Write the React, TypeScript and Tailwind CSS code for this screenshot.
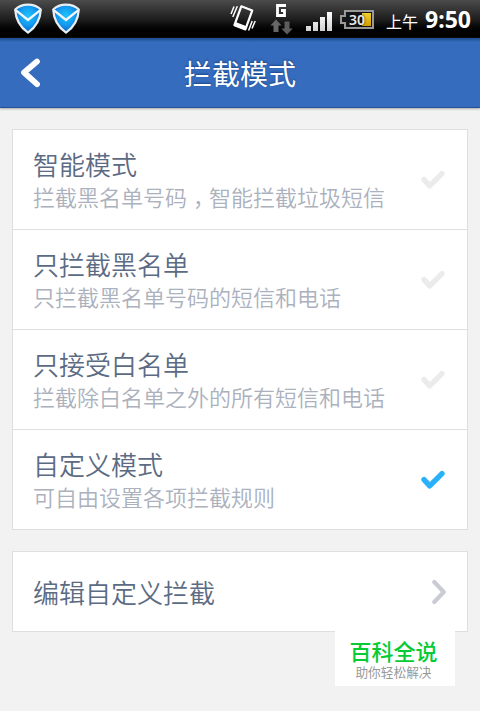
import * as React from 'react';

interface Mode {
    title: string;
    desc: React.ReactNode;
    checked?: boolean;
}

const modes: Mode[] = [
    {
        title: '智能模式',
        desc: <>拦截黑名单号码<span className="inline-block w-[22px] pl-[6px] [font-feature-settings:'halt']">，</span>智能拦截垃圾短信</>,
    },
    { title: '只拦截黑名单', desc: '只拦截黑名单号码的短信和电话' },
    { title: '只接受白名单', desc: '拦截除白名单之外的所有短信和电话' },
    { title: '自定义模式', desc: '可自由设置各项拦截规则', checked: true },
];

const ShieldIcon = ({ id }: { id: string }) => (
    <svg width="30" height="34" viewBox="0 0 30 34" className="block">
        <defs>
            <radialGradient id={id} cx="50%" cy="40%" r="55%">
                <stop offset="0" stopColor="#1cc4fb" />
                <stop offset="0.6" stopColor="#149bf0" />
                <stop offset="1" stopColor="#0b6ccc" />
            </radialGradient>
        </defs>
        <path d="M15 2.6C10.5 2.6 5.5 4.2 2.2 7.6C2.6 15.5 6.2 24.5 15 30.6C23.8 24.5 27.4 15.5 27.8 7.6C24.5 4.2 19.5 2.6 15 2.6Z" fill={`url(#${id})`} stroke="#e9eef2" strokeWidth="2.2" strokeLinejoin="round" />
        <path d="M3 8.4L15 18L27 8.4" fill="none" stroke="#f3f6f8" strokeWidth="2.4" />
    </svg>
);

const VibrateIcon = () => (
    <svg width="28" height="30" viewBox="0 0 28 30" className="block">
        <path d="M12.3 3.3L23.2 7.6L16.4 26.4L5.4 22.2Z" fill="none" stroke="#fff" strokeWidth="2.2" strokeLinejoin="round" />
        <path d="M6.6 19L17.6 23.2L16.4 26.9L5.2 22.6Z" fill="#fff" />
        <path d="M5 3.5L2 11M8.3 3.2L3.8 14M26.2 18L23 25.5M23.2 18L19.6 27.5" fill="none" stroke="#fff" strokeWidth="1.5" />
    </svg>
);

const DataIcon = () => (
    <svg width="24" height="32" viewBox="0 0 24 32" className="block">
        <path d="M16 2.5H7.5V12.5H14.5V7.5H11" fill="none" stroke="#fff" strokeWidth="2.8" />
        <path d="M6 16.5L11.7 22.5H8.5V29H3.5V22.5H.4Z" fill="#666" />
        <path d="M17 31.5L11.3 25.5H14.5V18.5H19.5V25.5H22.8Z" fill="#5c5c5c" />
    </svg>
);

const SignalIcon = () => (
    <svg width="27" height="20" viewBox="0 0 27 20" className="block">
        <defs>
            <linearGradient id="signal" x1="0" y1="0" x2="0" y2="20" gradientUnits="userSpaceOnUse">
                <stop offset="0" stopColor="#fff" />
                <stop offset="1" stopColor="#cfcfcf" />
            </linearGradient>
        </defs>
        <path d="M0 14h5v5H0zM7 10h5v9H7zM14 5h5v14h-5zM21 0h5v19h-5z" fill="url(#signal)" />
    </svg>
);

const BatteryIcon = () => (
    <div className="relative w-[34px] h-[20px]">
        <svg width="34" height="20" viewBox="0 0 34 20" className="block">
            <defs>
                <linearGradient id="charge" x1="0" y1="0" x2="0" y2="1">
                    <stop offset="0" stopColor="#f4d22d" />
                    <stop offset="1" stopColor="#d39b05" />
                </linearGradient>
            </defs>
            <path d="M5 2H33V19H5V14H1V7H5Z" fill="#151515" stroke="#999" strokeWidth="2" />
            <path d="M22 4h9v13h-9z" fill="url(#charge)" />
        </svg>
        <span className="absolute left-[9px] top-[1px] text-[14px] leading-[20px] font-semibold text-[#e8e8e8] [text-shadow:0_0_2px_#000]">30</span>
    </div>
);

const CheckIcon = ({ checked }: { checked?: boolean }) => (
    <svg width="24" height="20" viewBox="0 0 24 20" className={checked ? 'block text-[#29b2fa]' : 'block text-[#ebebeb]'}>
        <path d="M3 9.6L8.7 15.8L21 3.6" fill="none" stroke="currentColor" strokeWidth="5.4" strokeLinecap="round" strokeLinejoin="round" />
    </svg>
);

const StatusBar = () => (
    <div className="h-[38px] flex bg-linear-to-b from-[#4c4c4c] via-[#1f1f1f] via-50% to-black to-95% font-['Noto_Sans','Noto_Sans_CJK_SC',sans-serif]">
        <div className="flex gap-2 pl-[13px] pt-0.5">
            <ShieldIcon id="shield-a" />
            <ShieldIcon id="shield-b" />
        </div>
        <div className="flex-1 flex items-start justify-end pr-[9px]">
            <div className="pt-[3px] mr-[13px]"><VibrateIcon /></div>
            <div className="pt-[3px] mr-3"><DataIcon /></div>
            <div className="pt-3 mr-[7px]"><SignalIcon /></div>
            <div className="pt-[9px] mr-3"><BatteryIcon /></div>
            <span className="text-[16px] leading-[24px] pt-[10px] mr-[7px] text-white">上午</span>
            <span className="text-[23px] leading-[38px] font-bold text-white">9:50</span>
        </div>
    </div>
);

const Header = () => (
    <header className="relative h-[70px] flex items-center justify-center bg-linear-to-b from-[#1f4a8c] via-[#356cbe] via-[4px] to-[#356cbe] border-b border-[#24519a] shadow-[0_1px_2px_#aaa]">
        <svg width="22" height="34" viewBox="0 0 22 34" className="absolute left-[20px] top-[17px]">
            <path d="M17 6.5L4 17.5L17 29.2" fill="none" stroke="#fff" strokeWidth="5.8" strokeLinecap="round" strokeLinejoin="round" />
        </svg>
        <h1 className="text-[28px] leading-[40px] text-white [text-shadow:0_-1px_2px_#1d4585]">拦截模式</h1>
    </header>
);

export default function App() {
    return (
        <div className="relative w-[480px] h-[711px] overflow-hidden bg-[#f2f2f2] font-['Noto_Sans_CJK_SC',sans-serif]">
            <StatusBar />
            <Header />

            <main className="px-3 pt-[21px]">
                <ul className="bg-white border border-[#dfdfdf] divide-y divide-[#dfdfdf]">
                    {modes.map(mode => (
                        <li key={mode.title} className="h-[100px] last:h-[99px] flex items-start justify-between pl-5 pr-[22px]">
                            <div className="pt-[15px]">
                                <div className="text-[26px] leading-[38px] text-[#5b6b84] font-[350]">{mode.title}</div>
                                <div className="-mt-0.5 text-[22px] leading-[30px] text-[#abb1bd] font-[350] whitespace-nowrap">{mode.desc}</div>
                            </div>
                            <div className="pt-10"><CheckIcon checked={mode.checked} /></div>
                        </li>
                    ))}
                </ul>

                <div className="mt-[21px] h-[81px] flex items-center justify-between pl-5 pr-5 bg-white border border-[#dfdfdf]">
                    <span className="text-[26px] leading-[38px] text-[#5b6b84] font-[350]">编辑自定义拦截</span>
                    <svg width="16" height="26" viewBox="0 0 16 26" className="block">
                        <path d="M3.2 3L12.8 13L3.2 23" fill="none" stroke="#c9ccd5" strokeWidth="4.2" strokeLinecap="round" strokeLinejoin="round" />
                    </svg>
                </div>
            </main>

            <div className="absolute left-[335px] top-[630px] w-[120px] h-14 bg-white text-center pt-1.5 pr-[3px]">
                <div className="text-[22px] leading-[28px] font-medium text-[#07cb35]">百科全说</div>
                <div className="text-[12.7px] leading-[15px] text-[#999]">助你轻松解决</div>
            </div>
        </div>
    );
}
